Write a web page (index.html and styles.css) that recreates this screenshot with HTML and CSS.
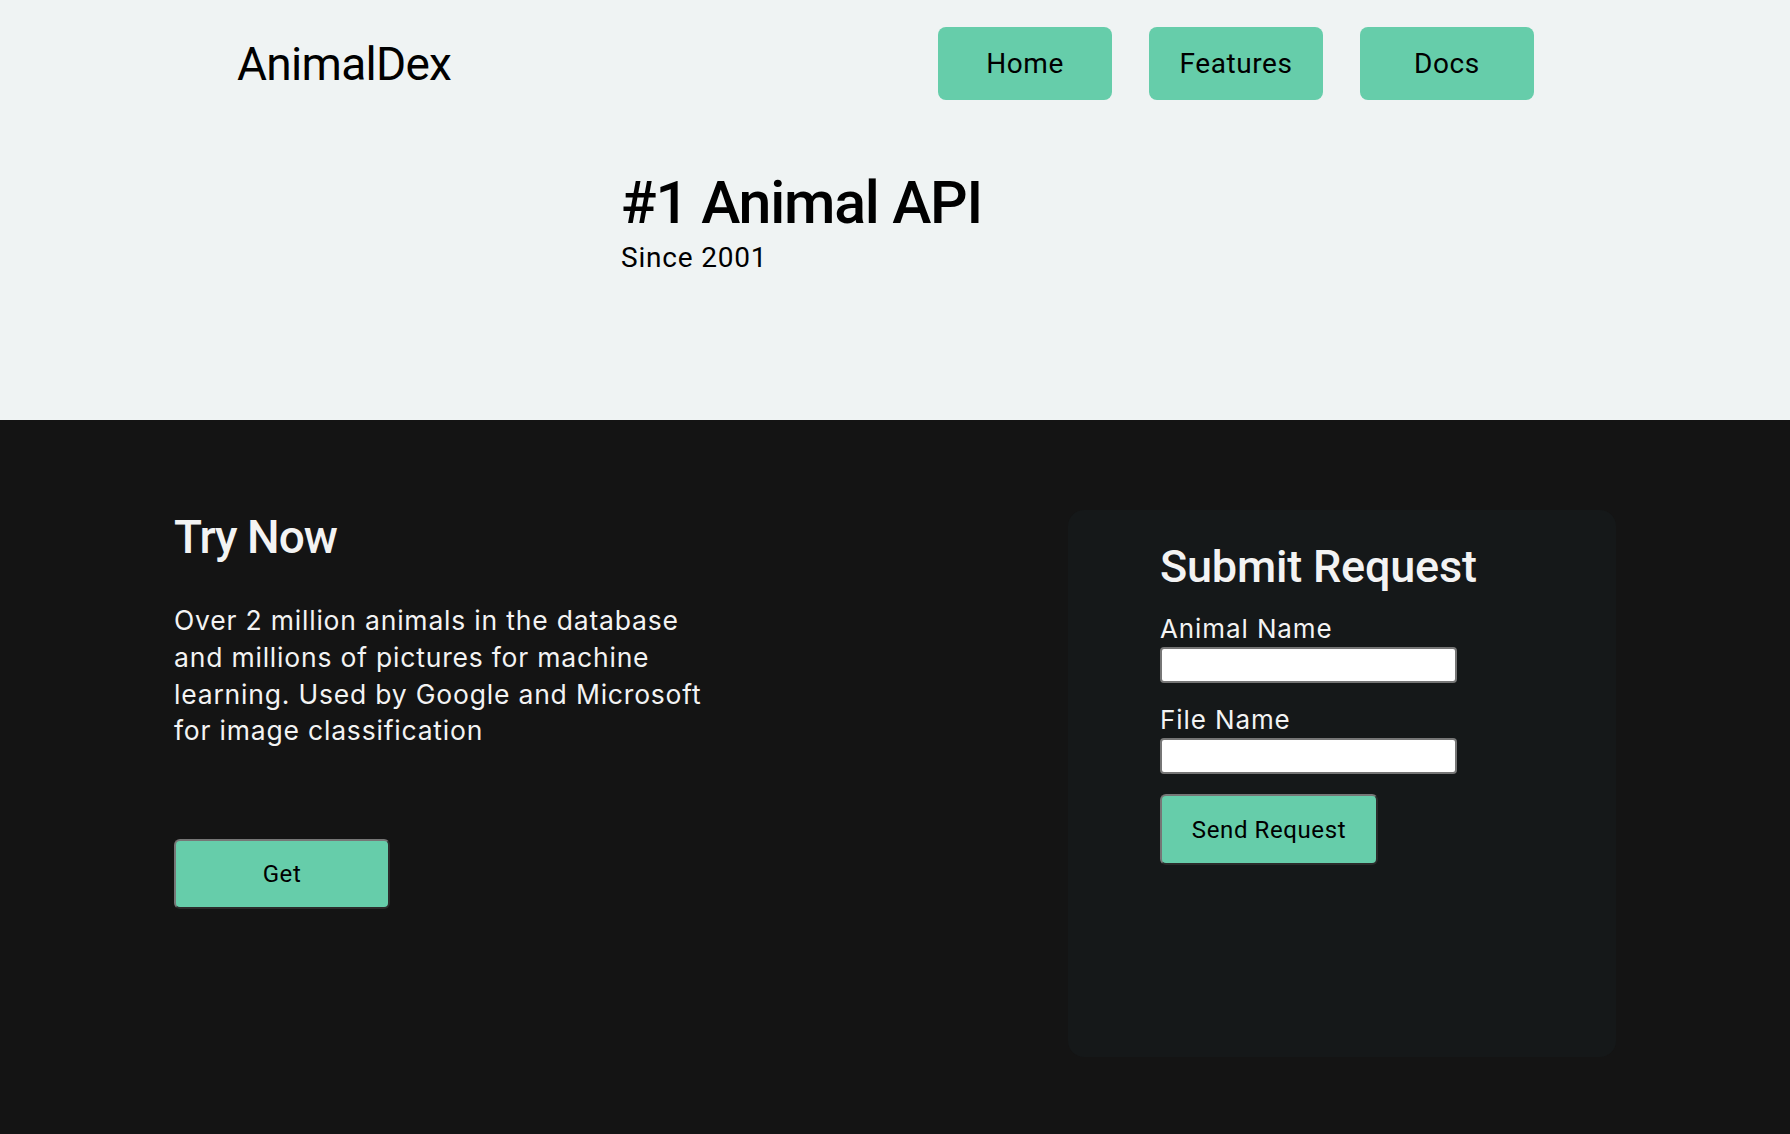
FILE: index.html
```html
<!DOCTYPE html>
<html lang="en">
<head>
<meta charset="utf-8">
<title>AnimalDex</title>
<link rel="stylesheet" href="styles.css">
</head>
<body>
<section class="top">
  <header class="header">
    <div class="logo">AnimalDex</div>
    <nav class="nav">
      <a class="nav-btn" href="#">Home</a>
      <a class="nav-btn" href="#">Features</a>
      <a class="nav-btn" href="#">Docs</a>
    </nav>
  </header>
  <div class="hero">
    <h1 class="hero-title">#1 Animal API</h1>
    <p class="hero-sub">Since 2001</p>
  </div>
</section>
<section class="dark">
  <div class="try">
    <h2 class="try-title">Try Now</h2>
    <p class="try-text">Over 2 million animals in the database and millions of pictures for machine learning. Used by Google and Microsoft for image classification</p>
    <button class="btn btn-get" type="button">Get</button>
  </div>
  <form class="card">
    <h2 class="card-title">Submit Request</h2>
    <label class="field-label" for="animal">Animal Name</label>
    <input class="field-input" id="animal" type="text">
    <label class="field-label field-label-2" for="file">File Name</label>
    <input class="field-input" id="file" type="text">
    <button class="btn btn-send" type="button">Send Request</button>
  </form>
</section>
</body>
</html>
```

FILE: styles.css
```css
* { box-sizing: border-box; }
html, body { margin: 0; padding: 0; }
body {
  font-family: Roboto, "Liberation Sans", sans-serif;
  background: #141414;
  color: #000;
}
.top {
  background: #eff3f3;
  height: 420px;
}
.header {
  display: flex;
  justify-content: space-between;
  align-items: center;
  padding: 27px 256px 0 237px;
}
.logo {
  font-size: 46px;
  line-height: 1;
  font-weight: 400;
  letter-spacing: -0.7px;
}
.nav {
  display: flex;
  gap: 37px;
}
.nav-btn {
  display: flex;
  align-items: center;
  justify-content: center;
  width: 174px;
  height: 73px;
  background: #66cdaa;
  border-radius: 8px;
  color: #000;
  text-decoration: none;
  font-size: 28px;
  letter-spacing: 0.6px;
}
.hero {
  padding-left: 621px;
  margin-top: 68px;
}
.hero-title {
  margin: 0;
  font-size: 59px;
  line-height: 1.2;
  font-weight: 500;
  letter-spacing: -1.2px;
}
.hero-sub {
  margin: 2px 0 0;
  font-size: 28px;
  line-height: 1.2;
  letter-spacing: 0.8px;
}
.dark {
  display: flex;
  justify-content: space-between;
  padding: 90px 174px 77px;
  color: #f3f3f3;
}
.try {
  width: 560px;
}
.try-title {
  margin: 0;
  font-size: 46px;
  line-height: 1.2;
  font-weight: 500;
  letter-spacing: -1px;
}
.try-text {
  margin: 37px 0 0;
  max-width: 540px;
  font-family: Inter, Roboto, sans-serif;
  font-size: 26.5px;
  line-height: 36.7px;
  letter-spacing: 0.8px;
}
.btn {
  display: block;
  background: #66cdaa;
  color: #000;
  font-family: inherit;
  font-size: 24px;
  letter-spacing: 0.6px;
  border-style: solid;
  border-width: 2px;
  border-color: #767676 #2b2b2b #2b2b2b #767676;
  border-radius: 6px;
  cursor: pointer;
}
.btn-get {
  margin-top: 90px;
  width: 216px;
  height: 70px;
}
.card {
  width: 548px;
  height: 547px;
  background: #151819;
  border-radius: 16px;
  padding: 30px 92px;
}
.card-title {
  margin: 0;
  font-size: 45px;
  line-height: 1.2;
  font-weight: 500;
  letter-spacing: -0.2px;
}
.field-label {
  display: block;
  margin-top: 19.6px;
  font-family: Inter, Roboto, sans-serif;
  font-size: 26px;
  line-height: 30px;
  letter-spacing: 0.9px;
}
.field-label-2 {
  margin-top: 22.6px;
}
.field-input {
  display: block;
  margin: 3px 0 0;
  width: 297px;
  height: 36px;
  background: #fff;
  border: 2px solid #767676;
  border-radius: 4px;
}
.btn-send {
  margin-top: 20px;
  width: 218px;
  height: 71px;
}
```
